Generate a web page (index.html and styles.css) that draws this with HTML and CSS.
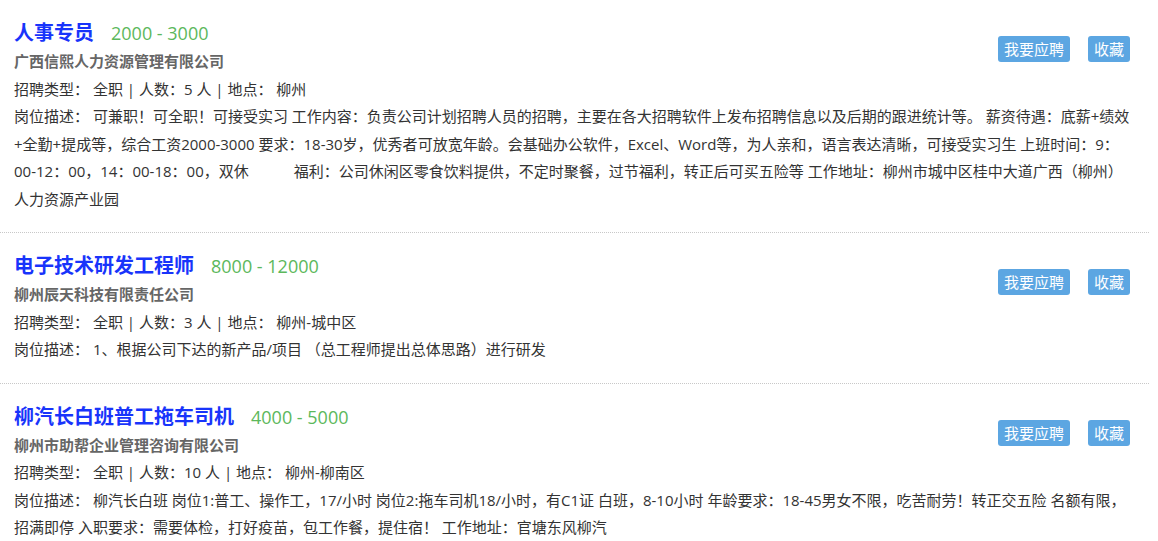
FILE: index.html
```html
<!DOCTYPE html>
<html lang="zh-CN">
<head>
    <meta charset="UTF-8">
    <meta name="viewport" content="width=device-width, initial-scale=1.0">
    <title>招聘信息</title>
    <link rel="stylesheet" href="styles.css">
</head>
<body>
    <div class="job-list">
        <div class="job-item">
            <div class="job-actions">
                <button class="btn">我要应聘</button>
                <button class="btn">收藏</button>
            </div>
            <h3 class="job-title">人事专员<span class="salary">2000 - 3000</span></h3>
            <p class="company">广西信熙人力资源管理有限公司</p>
            <p class="job-info">招聘类型： 全职 | 人数：5 人 | 地点： 柳州</p>
            <p class="job-desc">岗位描述： 可兼职！可全职！可接受实习 工作内容：负责公司计划招聘人员的招聘，主要在各大招聘软件上发布招聘信息以及后期的跟进统计等。 薪资待遇：底薪+绩效+全勤+提成等，综合工资2000-3000 要求：18-30岁，优秀者可放宽年龄。会基础办公软件，Excel、Word等，为人亲和，语言表达清晰，可接受实习生 上班时间：9：00-12：00，14：00-18：00，双休　　　福利：公司休闲区零食饮料提供，不定时聚餐，过节福利，转正后可买五险等 工作地址：柳州市城中区桂中大道广西（柳州）人力资源产业园</p>
        </div>

        <div class="job-item">
            <div class="job-actions">
                <button class="btn">我要应聘</button>
                <button class="btn">收藏</button>
            </div>
            <h3 class="job-title">电子技术研发工程师<span class="salary">8000 - 12000</span></h3>
            <p class="company">柳州辰天科技有限责任公司</p>
            <p class="job-info">招聘类型： 全职 | 人数：3 人 | 地点： 柳州-城中区</p>
            <p class="job-desc">岗位描述： 1、根据公司下达的新产品/项目 （总工程师提出总体思路）进行研发</p>
        </div>

        <div class="job-item">
            <div class="job-actions">
                <button class="btn">我要应聘</button>
                <button class="btn">收藏</button>
            </div>
            <h3 class="job-title">柳汽长白班普工拖车司机<span class="salary">4000 - 5000</span></h3>
            <p class="company">柳州市助帮企业管理咨询有限公司</p>
            <p class="job-info">招聘类型： 全职 | 人数：10 人 | 地点： 柳州-柳南区</p>
            <p class="job-desc">岗位描述： 柳汽长白班 岗位1:普工、操作工，17/小时 岗位2:拖车司机18/小时，有C1证 白班，8-10小时 年龄要求：18-45男女不限，吃苦耐劳！转正交五险 名额有限，招满即停 入职要求：需要体检，打好疫苗，包工作餐，提住宿！ 工作地址：官塘东风柳汽</p>
        </div>
    </div>
</body>
</html>
```

FILE: styles.css
```css
body {
    font-family: "Open Sans", "Noto Sans CJK SC", sans-serif;
    background-color: #fff;
    color: #333;
    margin: 0;
    padding: 0;
    text-spacing-trim: space-all;
}
.job-list {
    width: 1149px;
}
.job-item {
    padding: 18px 18px 19px 14px;
    border-bottom: 1px dotted #c8c8c8;
}
.job-item p {
    margin: 0;
}
.job-actions {
    float: right;
    display: flex;
    gap: 18px;
    margin: 18px 1px 0 0;
}
.btn {
    font-family: "Open Sans", "Noto Sans CJK SC", sans-serif;
    font-size: 15px;
    height: 26px;
    line-height: 26px;
    padding: 0 6px;
    background-color: #5ca6e2;
    color: white;
    border: none;
    border-radius: 3px;
    cursor: pointer;
}
.job-title {
    margin: 0;
    font-size: 20px;
    line-height: 30px;
    font-weight: bold;
    color: #1834fb;
}
.salary {
    margin-left: 17px;
    font-size: 18px;
    font-weight: normal;
    color: #5cb85c;
}
.company {
    font-size: 15px;
    line-height: 27.5px;
    font-weight: bold;
    color: #666;
}
.job-info, .job-desc {
    font-size: 15px;
    line-height: 27.5px;
}
```
